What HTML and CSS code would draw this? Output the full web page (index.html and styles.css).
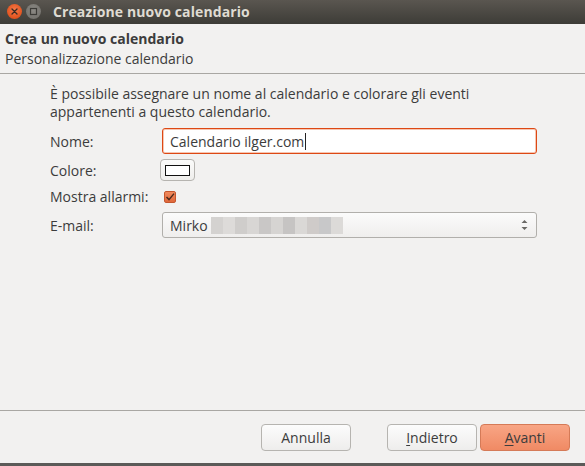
FILE: index.html
```html
<!DOCTYPE html>
<html lang="it">
<head>
<meta charset="utf-8">
<title>Creazione nuovo calendario</title>
<link rel="stylesheet" href="styles.css">
</head>
<body>
<div class="window">
  <div class="titlebar">
    <span class="wbtn close">
      <svg width="15" height="15" viewBox="0 0 15 15"><path d="M5 5 L10 10 M10 5 L5 10" stroke="#3a2a22" stroke-width="1.3" stroke-linecap="round"/></svg>
    </span>
    <span class="wbtn max">
      <svg width="15" height="15" viewBox="0 0 15 15"><rect x="4.5" y="4.5" width="6" height="6" fill="none" stroke="#3c3b37" stroke-width="1.2"/></svg>
    </span>
    <span class="title">Creazione nuovo calendario</span>
  </div>
  <div class="header">
    <div class="h-title">Crea un nuovo calendario</div>
    <div class="h-sub">Personalizzazione calendario</div>
  </div>
  <div class="content">
    <p class="desc">È possibile assegnare un nome al calendario e colorare gli eventi appartenenti a questo calendario.</p>
    <div class="form">
      <label class="lbl r-nome">Nome:</label>
      <div class="field r-nome"><div class="input">Calendario ilger.com<span class="caret"></span></div></div>
      <label class="lbl r-col">Colore:</label>
      <div class="field r-col"><div class="colorbtn"><span class="swatch"></span></div></div>
      <label class="lbl r-chk">Mostra allarmi:</label>
      <div class="field r-chk">
        <span class="check"><svg width="12" height="12" viewBox="0 0 12 12"><path d="M2.5 6 L5 8.6 L10 2.6" fill="none" stroke="#4a2a1c" stroke-width="1.4"/></svg></span>
      </div>
      <label class="lbl r-mail">E-mail:</label>
      <div class="field r-mail">
        <div class="combo">
          <span class="ctext">Mirko</span>
          <span class="blur">
            <i style="background:#d4d2d0"></i><i style="background:#dddbd9"></i><i style="background:#cfcdcb"></i><i style="background:#d8d6d4"></i><i style="background:#c9c7c6"></i><i style="background:#d6d4d2"></i><i style="background:#c6c4c3"></i><i style="background:#dad8d6"></i><i style="background:#cfcbc9"></i><i style="background:#c8c8c9"></i><i style="background:#dcdad8"></i>
          </span>
          <span class="arrows">
            <svg width="7" height="12" viewBox="0 0 7 12"><path d="M0.5 4 L3.5 1 L6.5 4 Z M0.5 8 L3.5 11 L6.5 8 Z" fill="#6a6865"/></svg>
          </span>
        </div>
      </div>
    </div>
  </div>
  <div class="footer">
    <button class="btn">Annulla</button>
    <div class="spacer"></div>
    <button class="btn"><u>I</u>ndietro</button>
    <button class="btn primary"><u>A</u>vanti</button>
  </div>
  <div class="bottomstrip"></div>
</div>
</body>
</html>
```
FILE: styles.css
```css
* { box-sizing: border-box; }
html, body { margin: 0; padding: 0; }
body {
  width: 585px;
  height: 466px;
  overflow: hidden;
  background: #f2f1f0;
  font-family: "Open Sans", "DejaVu Sans", sans-serif;
  font-size: 14px;
  color: #3c3c3c;
}
.window {
  display: flex;
  flex-direction: column;
  height: 466px;
}
.titlebar {
  height: 24px;
  flex: none;
  display: flex;
  align-items: center;
  padding-left: 7px;
  background: linear-gradient(#5a5650, #3d3c37);
}
.wbtn {
  width: 15px;
  height: 15px;
  border-radius: 50%;
  display: flex;
  margin-top: -2px;
}
.close {
  background: radial-gradient(circle at 50% 40%, #f47a4a, #e2531e 70%, #c4441a);
}
.max {
  margin-left: 4px;
  background: radial-gradient(circle at 50% 40%, #8c8a85, #76746f 70%, #5f5d58);
}
.title {
  margin-left: 12px;
  margin-top: -2px;
  font-weight: bold;
  font-size: 14px;
  color: #dfdbd2;
  letter-spacing: 0.1px;
}
.header {
  flex: none;
  height: 50px;
  padding: 5px 5px 0;
  border-bottom: 1px solid #a9a7a3;
  line-height: 20px;
}
.h-title { font-weight: bold; color: #3c3c3c; }
.h-sub { color: #3c3c3c; }
.content {
  flex: 1;
  padding: 11px 0 0 50px;
}
.desc {
  margin: 0;
  width: 470px;
  line-height: 18px;
}
.form {
  margin-top: 7px;
  display: grid;
  grid-template-columns: 112px 375px;
  grid-template-rows: 26px 22px 21px 26px;
  row-gap: 5px;
  align-items: center;
}
.lbl { align-self: center; }
.input {
  height: 26px;
  background: #fff;
  border: 1px solid #dd4814;
  box-shadow: inset 0 0 0 1px #f6c6b2;
  border-radius: 3px;
  padding: 0 7px;
  display: flex;
  align-items: center;
}
.caret {
  display: inline-block;
  width: 1px;
  height: 17px;
  background: #222;
  margin-left: 1px;
}
.colorbtn {
  margin-left: -2px;
  width: 35px;
  height: 22px;
  border: 1px solid #b6b4b0;
  border-radius: 4px;
  background: linear-gradient(#fbfbfa, #efeeec);
  display: flex;
  align-items: center;
  justify-content: center;
}
.swatch {
  width: 25px;
  height: 11px;
  border: 1px solid #111;
  background: #fff;
}
.check {
  margin-left: 2px;
  width: 12px;
  height: 12px;
  display: flex;
  background: linear-gradient(#f08a5d, #e0673a);
  border: 1px solid #c4562d;
  border-radius: 2px;
}
.check svg { margin: -1px; }
.combo {
  height: 26px;
  border: 1px solid #b1afab;
  border-radius: 3px;
  background: linear-gradient(#fbfbfb, #efeeed);
  display: flex;
  align-items: center;
  padding: 0 8px 0 7px;
}
.ctext { margin-right: 3px; }
.blur { display: flex; height: 17px; }
.blur i { display: block; width: 12px; height: 17px; }
.arrows { margin-left: auto; display: flex; }
.footer {
  flex: none;
  height: 53px;
  border-top: 1px solid #a9a7a3;
  display: flex;
  align-items: flex-start;
  padding: 13px 0 0 261px;
}
.spacer { width: 33px; flex: none; }
.btn {
  flex: none;
  width: 90px;
  height: 27px;
  font-family: inherit;
  font-size: 14px;
  color: #3c3c3c;
  border: 1px solid #b6b4b0;
  border-radius: 4px;
  background: linear-gradient(#fcfcfc, #eeedec);
  padding: 0;
  margin-right: 3px;
}
.btn u { text-decoration: underline; text-underline-offset: 2px; }
.primary {
  background: linear-gradient(#f8a585, #f08a64);
  border-color: #d57a57;
}
.bottomstrip {
  flex: none;
  height: 3px;
  background: #5b5a58;
}
```
